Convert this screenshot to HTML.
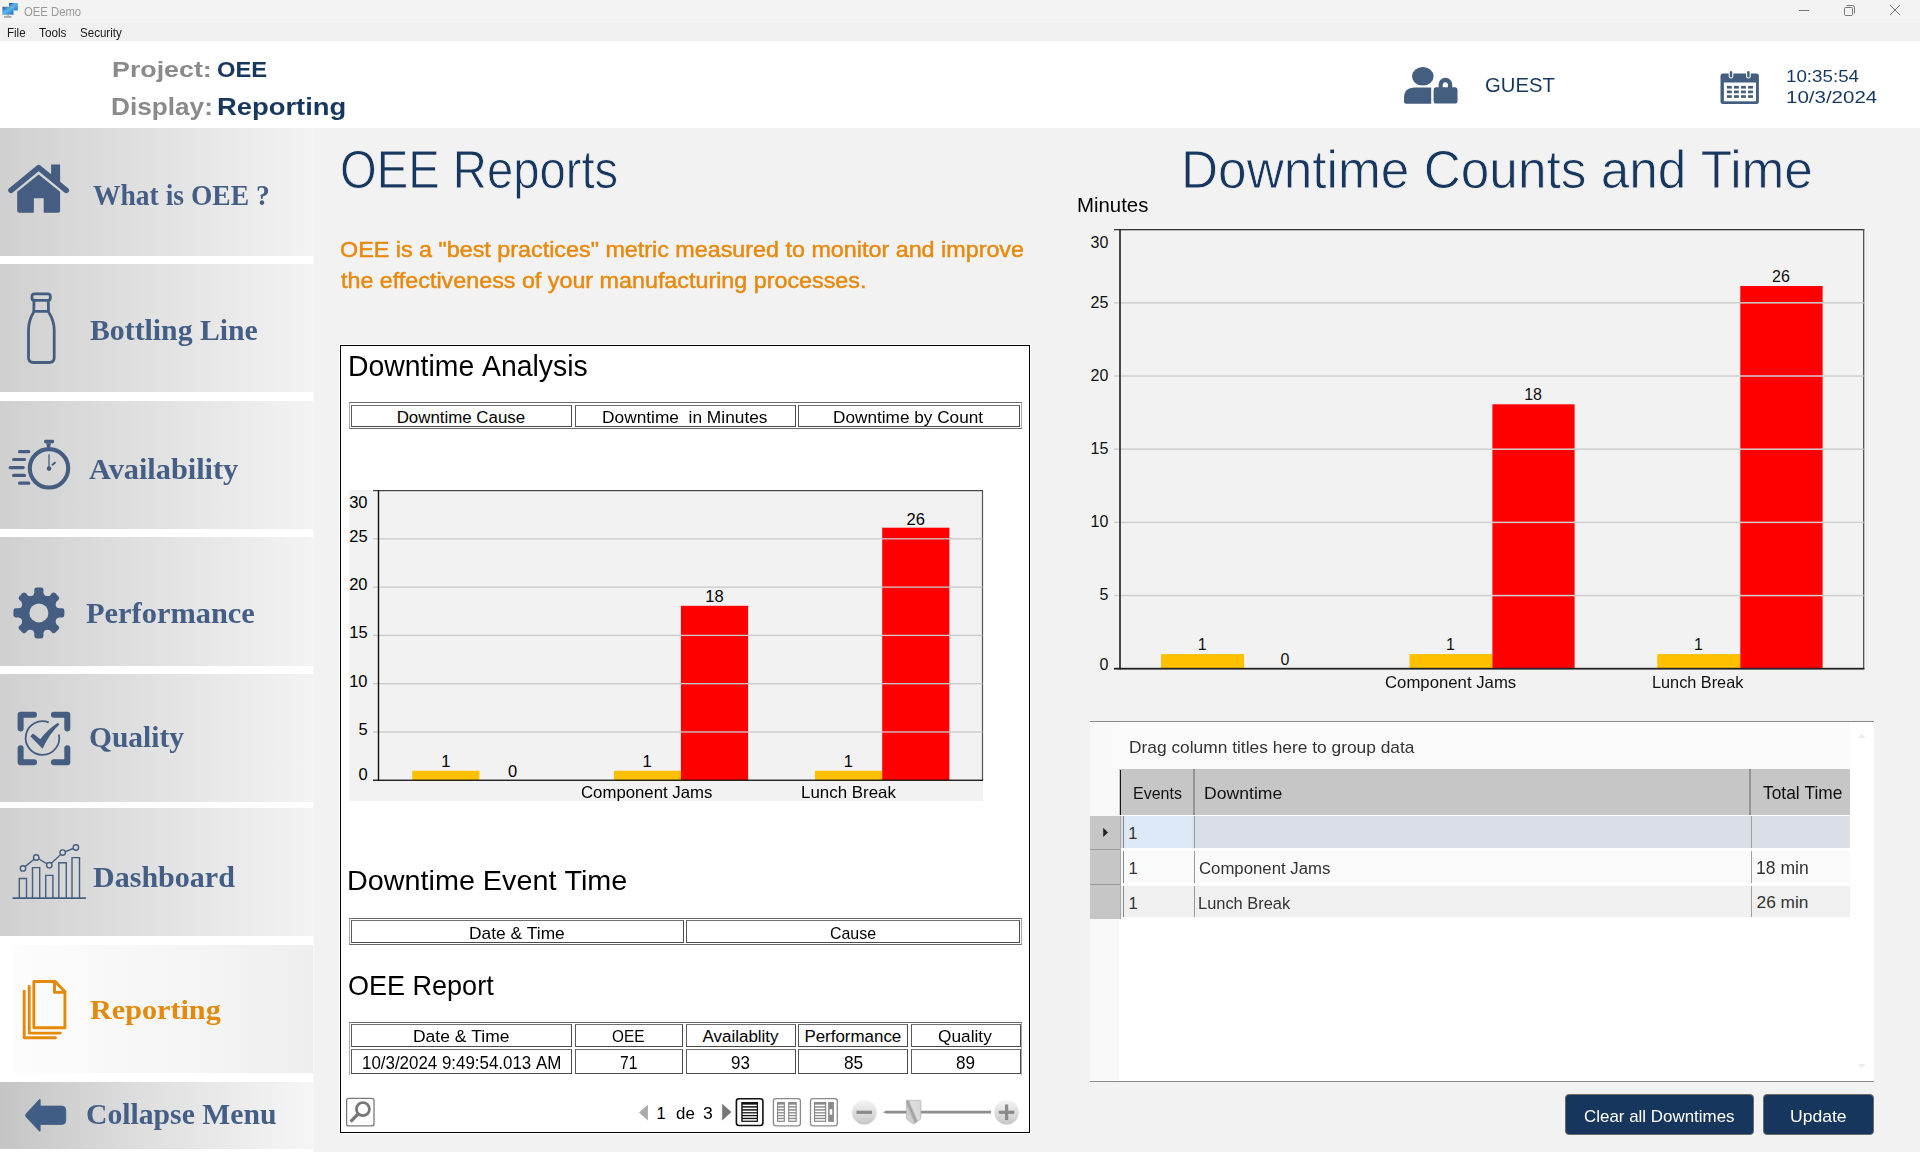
<!DOCTYPE html>
<html><head><meta charset="utf-8"><title>OEE Demo</title>
<style>
html,body{margin:0;padding:0;width:1920px;height:1152px;overflow:hidden;background:#f2f2f2}
.r{position:absolute}
.t{position:absolute;white-space:nowrap;transform-origin:0 0}
.bl{display:inline-block;width:0;height:0;vertical-align:baseline}
svg.full{position:absolute;left:0;top:0}
</style></head><body>
<div class="r" style="left:0;top:0;width:1920px;height:23px;background:#f3f3f3"></div>
<div class="r" style="left:0;top:23px;width:1920px;height:18px;background:#f0f0f0"></div>
<svg class="r" style="left:0;top:0" width="22" height="22" viewBox="0 0 22 22">
<defs><linearGradient id="mon" x1="0" y1="0" x2="1" y2="1"><stop offset="0" stop-color="#1a4fa0"/><stop offset="0.45" stop-color="#5bb8ee"/><stop offset="1" stop-color="#0a6cc8"/></linearGradient></defs>
<rect x="9" y="3" width="8.7" height="7.4" fill="url(#mon)"/>
<rect x="2.3" y="6.9" width="11.2" height="7.9" fill="url(#mon)" stroke="#b8b0a8" stroke-width="0.5"/>
<rect x="4" y="16" width="7.5" height="1.8" fill="#a8a8a8"/><rect x="7" y="14.8" width="2" height="1.2" fill="#bbb"/>
</svg>
<div class="t t1" style="left:23.55px;top:6.31px;font:400 12.65px/12.65px 'Liberation Sans',sans-serif;color:#9a9a9a;transform:scaleX(0.8931);">OEE&#160;Demo<span class="bl"></span></div>
<div class="t t2" style="left:6.56px;top:27.31px;font:400 12.35px/12.35px 'Liberation Sans',sans-serif;color:#1a1a1a;transform:scaleX(0.9351);">File<span class="bl"></span></div>
<div class="t t3" style="left:38.81px;top:27.31px;font:400 12.35px/12.35px 'Liberation Sans',sans-serif;color:#1a1a1a;transform:scaleX(0.9541);">Tools<span class="bl"></span></div>
<div class="t t4" style="left:80.03px;top:27.31px;font:400 12.35px/12.35px 'Liberation Sans',sans-serif;color:#1a1a1a;transform:scaleX(0.9368);">Security<span class="bl"></span></div>
<div class="r" style="left:1799px;top:10px;width:10px;height:1px;background:#777"></div>
<svg class="r" style="left:1843px;top:4px" width="13" height="13" viewBox="0 0 13 13"><rect x="1.5" y="3.5" width="8" height="8" rx="1" fill="none" stroke="#777"/><path d="M3.5 1.5h6a2 2 0 0 1 2 2v6" fill="none" stroke="#777"/></svg>
<svg class="r" style="left:1889px;top:4px" width="12" height="12" viewBox="0 0 12 12"><path d="M1 1L11 11M11 1L1 11" stroke="#777" stroke-width="1"/></svg>
<div class="r" style="left:0;top:41px;width:1920px;height:87px;background:#fff"></div>
<div class="t t5" style="left:111.53px;top:58.10px;font:700 22.67px/22.67px 'Liberation Sans',sans-serif;color:#8a8a8a;transform:scaleX(1.1829);">Project:<span class="bl"></span></div>
<div class="t t6" style="left:216.56px;top:58.10px;font:700 22.67px/22.67px 'Liberation Sans',sans-serif;color:#17375f;transform:scaleX(1.0476);">OEE<span class="bl"></span></div>
<div class="t t7" style="left:111.31px;top:95.70px;font:700 23.26px/23.26px 'Liberation Sans',sans-serif;color:#8a8a8a;transform:scaleX(1.1264);">Display:<span class="bl"></span></div>
<div class="t t8" style="left:217.23px;top:95.70px;font:700 23.26px/23.26px 'Liberation Sans',sans-serif;color:#17375f;transform:scaleX(1.1776);">Reporting<span class="bl"></span></div>
<svg class="r" style="left:1400px;top:62px" width="62" height="46" viewBox="1400 62 62 46">
<ellipse cx="1422.8" cy="76.3" rx="10.8" ry="9.3" fill="#445e80"/>
<path d="M1404 101.5 V98 Q1404 87.6 1415 87.6 H1431.2 V103.7 H1406.2 Q1404 103.7 1404 101.5 Z" fill="#445e80"/>
<path d="M1438.6 88 V84.5 A6.8 6.8 0 0 1 1452.2 84.5 V88 H1448 V84.5 A2.7 2.7 0 0 0 1442.7 84.5 V88Z" fill="#445e80"/>
<rect x="1433.6" y="87.3" width="23.9" height="16.3" rx="2.6" fill="#445e80"/>
</svg>
<div class="t t9" style="left:1484.59px;top:74.75px;font:400 19.99px/19.99px 'Liberation Sans',sans-serif;color:#17375f;transform:scaleX(1.0133);">GUEST<span class="bl"></span></div>
<svg class="r" style="left:1718px;top:68px" width="44" height="40" viewBox="1718 68 44 40"><rect x="1720.5" y="73.6" width="38.4" height="30.3" rx="2.5" fill="#445e80"/><rect x="1723.9" y="82.5" width="32.1" height="18.8" fill="#fff"/><rect x="1728.7" y="70.5" width="4.6" height="8" rx="2.3" fill="#fff"/><rect x="1729.8" y="71" width="2.4" height="6.5" rx="1.2" fill="#445e80"/><rect x="1746.1000000000001" y="70.5" width="4.6" height="8" rx="2.3" fill="#fff"/><rect x="1747.2" y="71" width="2.4" height="6.5" rx="1.2" fill="#445e80"/><rect x="1726.90" y="85.90" width="4.9" height="2.7" fill="#445e80"/><rect x="1733.95" y="85.90" width="4.9" height="2.7" fill="#445e80"/><rect x="1741.00" y="85.90" width="4.9" height="2.7" fill="#445e80"/><rect x="1748.05" y="85.90" width="4.9" height="2.7" fill="#445e80"/><rect x="1726.90" y="90.55" width="4.9" height="2.7" fill="#445e80"/><rect x="1733.95" y="90.55" width="4.9" height="2.7" fill="#445e80"/><rect x="1741.00" y="90.55" width="4.9" height="2.7" fill="#445e80"/><rect x="1748.05" y="90.55" width="4.9" height="2.7" fill="#445e80"/><rect x="1726.90" y="95.20" width="4.9" height="2.7" fill="#445e80"/><rect x="1733.95" y="95.20" width="4.9" height="2.7" fill="#445e80"/><rect x="1741.00" y="95.20" width="4.9" height="2.7" fill="#445e80"/><rect x="1748.05" y="95.20" width="4.9" height="2.7" fill="#445e80"/></svg>
<div class="t t10" style="left:1786.48px;top:68.01px;font:400 17.01px/17.01px 'Liberation Sans',sans-serif;color:#17375f;transform:scaleX(1.1039);">10:35:54<span class="bl"></span></div>
<div class="t t11" style="left:1786.33px;top:89.90px;font:400 16.72px/16.72px 'Liberation Sans',sans-serif;color:#17375f;transform:scaleX(1.2273);">10/3/2024<span class="bl"></span></div>
<div class="r" style="left:0;top:128px;width:1920px;height:1024px;background:#f2f2f2"></div>
<div class="r" style="left:0;top:128px;width:314px;height:1024px;background:#fff"></div>
<div class="r" style="left:0;top:128px;width:313px;height:128px;background:linear-gradient(90deg,#d0d0d0,#f3f3f3)"></div>
<div class="r" style="left:0;top:264px;width:313px;height:128px;background:linear-gradient(90deg,#d0d0d0,#f3f3f3)"></div>
<div class="r" style="left:0;top:401px;width:313px;height:128px;background:linear-gradient(90deg,#d0d0d0,#f3f3f3)"></div>
<div class="r" style="left:0;top:537px;width:313px;height:129px;background:linear-gradient(90deg,#d0d0d0,#f3f3f3)"></div>
<div class="r" style="left:0;top:674px;width:313px;height:128px;background:linear-gradient(90deg,#d0d0d0,#f3f3f3)"></div>
<div class="r" style="left:0;top:808px;width:313px;height:128px;background:linear-gradient(90deg,#d0d0d0,#f3f3f3)"></div>
<div class="r" style="left:13px;top:945px;width:300px;height:128px;background:linear-gradient(90deg,#fcfcfc,#f5f5f5 60%,#eeeeee)"></div>
<div class="r" style="left:0;top:1082px;width:313px;height:67px;background:linear-gradient(90deg,#c4c4c4,#dedede 45%,#f6f6f6)"></div>
<div class="r" style="left:313px;top:128px;width:1px;height:1024px;background:#f6f6f6"></div>
<div class="t t12" style="left:92.62px;top:180.71px;font:700 29.17px/29.17px 'Liberation Serif',serif;color:#445e86;transform:scaleX(0.9444);">What&#160;is&#160;OEE&#160;?<span class="bl"></span></div>
<div class="t t13" style="left:89.81px;top:315.21px;font:700 30.09px/30.09px 'Liberation Serif',serif;color:#445e86;transform:scaleX(0.9893);">Bottling&#160;Line<span class="bl"></span></div>
<div class="t t14" style="left:89.20px;top:453.81px;font:700 30.09px/30.09px 'Liberation Serif',serif;color:#445e86;transform:scaleX(1.0074);">Availability<span class="bl"></span></div>
<div class="t t15" style="left:85.58px;top:598.81px;font:700 29.17px/29.17px 'Liberation Serif',serif;color:#445e86;transform:scaleX(1.0428);">Performance<span class="bl"></span></div>
<div class="t t16" style="left:89.31px;top:722.32px;font:700 29.78px/29.78px 'Liberation Serif',serif;color:#445e86;transform:scaleX(0.9905);">Quality<span class="bl"></span></div>
<div class="t t17" style="left:92.69px;top:862.71px;font:700 29.17px/29.17px 'Liberation Serif',serif;color:#445e86;transform:scaleX(1.0299);">Dashboard<span class="bl"></span></div>
<div class="t t18" style="left:89.77px;top:996.01px;font:700 28.25px/28.25px 'Liberation Serif',serif;color:#e5890a;transform:scaleX(1.0680);">Reporting<span class="bl"></span></div>
<div class="t t19" style="left:85.56px;top:1099.82px;font:700 28.86px/28.86px 'Liberation Serif',serif;color:#445e86;transform:scaleX(1.0284);">Collapse&#160;Menu<span class="bl"></span></div>
<div class="r" style="left:339px;top:344px;width:692px;height:790px;background:#fff"></div>
<div class="r" style="left:340px;top:345px;width:688px;height:786px;border:1px solid #000;background:#fff"></div>
<div class="r" style="left:349px;top:402px;width:673px;height:27px;border-top:1px solid #6a6a6a;border-bottom:1px solid #6a6a6a;border-left:1px solid #a8a8a8;border-right:1px solid #a8a8a8;box-sizing:border-box;background:#fff"></div>
<div class="r" style="left:351px;top:405px;width:221px;height:22px;box-sizing:border-box;border-style:solid;border-width:1px;border-color:#707070 #4a4a4a #4a4a4a #5a5a5a;background:#fff"></div>
<div class="r" style="left:575px;top:405px;width:220.5px;height:22px;box-sizing:border-box;border-style:solid;border-width:1px;border-color:#707070 #4a4a4a #4a4a4a #5a5a5a;background:#fff"></div>
<div class="r" style="left:798px;top:405px;width:222px;height:22px;box-sizing:border-box;border-style:solid;border-width:1px;border-color:#707070 #4a4a4a #4a4a4a #5a5a5a;background:#fff"></div>
<div class="r" style="left:349px;top:490px;width:634px;height:311px;background:#f2f2f2"></div>
<div class="r" style="left:349px;top:918px;width:673px;height:27px;border-top:1px solid #6a6a6a;border-bottom:1px solid #6a6a6a;border-left:1px solid #a8a8a8;border-right:1px solid #a8a8a8;box-sizing:border-box;background:#fff"></div>
<div class="r" style="left:351px;top:920px;width:333px;height:23px;box-sizing:border-box;border-style:solid;border-width:1px;border-color:#707070 #4a4a4a #4a4a4a #5a5a5a;background:#fff"></div>
<div class="r" style="left:686px;top:920px;width:334px;height:23px;box-sizing:border-box;border-style:solid;border-width:1px;border-color:#707070 #4a4a4a #4a4a4a #5a5a5a;background:#fff"></div>
<div class="r" style="left:349px;top:1022px;width:673px;height:53px;border-top:1px solid #6a6a6a;border-left:1px solid #a8a8a8;border-right:1px solid #a8a8a8;box-sizing:border-box;background:#fff"></div>
<div class="r" style="left:351px;top:1024px;width:221px;height:22.5px;box-sizing:border-box;border-style:solid;border-width:1px;border-color:#707070 #4a4a4a #4a4a4a #5a5a5a;background:#fff"></div>
<div class="r" style="left:574.5px;top:1024px;width:108.5px;height:22.5px;box-sizing:border-box;border-style:solid;border-width:1px;border-color:#707070 #4a4a4a #4a4a4a #5a5a5a;background:#fff"></div>
<div class="r" style="left:686px;top:1024px;width:110px;height:22.5px;box-sizing:border-box;border-style:solid;border-width:1px;border-color:#707070 #4a4a4a #4a4a4a #5a5a5a;background:#fff"></div>
<div class="r" style="left:798px;top:1024px;width:110px;height:22.5px;box-sizing:border-box;border-style:solid;border-width:1px;border-color:#707070 #4a4a4a #4a4a4a #5a5a5a;background:#fff"></div>
<div class="r" style="left:911px;top:1024px;width:110px;height:22.5px;box-sizing:border-box;border-style:solid;border-width:1px;border-color:#707070 #4a4a4a #4a4a4a #5a5a5a;background:#fff"></div>
<div class="r" style="left:351px;top:1049px;width:221px;height:25px;box-sizing:border-box;border-style:solid;border-width:1px;border-color:#707070 #4a4a4a #4a4a4a #5a5a5a;background:#fff"></div>
<div class="r" style="left:574.5px;top:1049px;width:108.5px;height:25px;box-sizing:border-box;border-style:solid;border-width:1px;border-color:#707070 #4a4a4a #4a4a4a #5a5a5a;background:#fff"></div>
<div class="r" style="left:686px;top:1049px;width:110px;height:25px;box-sizing:border-box;border-style:solid;border-width:1px;border-color:#707070 #4a4a4a #4a4a4a #5a5a5a;background:#fff"></div>
<div class="r" style="left:798px;top:1049px;width:110px;height:25px;box-sizing:border-box;border-style:solid;border-width:1px;border-color:#707070 #4a4a4a #4a4a4a #5a5a5a;background:#fff"></div>
<div class="r" style="left:911px;top:1049px;width:110px;height:25px;box-sizing:border-box;border-style:solid;border-width:1px;border-color:#707070 #4a4a4a #4a4a4a #5a5a5a;background:#fff"></div>
<div class="r" style="left:1090px;top:721px;width:784px;height:361px;background:#fff;border-top:1px solid #8a8a8a;border-bottom:1px solid #8a8a8a;box-sizing:border-box"></div>
<div class="r" style="left:1090px;top:722px;width:29px;height:359px;background:#f9f9f9"></div>
<div class="r" style="left:1119px;top:722px;width:731px;height:47px;background:#fafafa"></div>
<div class="r" style="left:1119px;top:769px;width:731px;height:46px;background:#c6c6c6"></div>
<div class="r" style="left:1119.5px;top:770px;width:1.6px;height:45px;background:#151515"></div>
<div class="r" style="left:1192.5px;top:769px;width:2px;height:46px;background:#939393"></div>
<div class="r" style="left:1749px;top:769px;width:2px;height:46px;background:#939393"></div>
<div class="r" style="left:1090px;top:815.5px;width:29.5px;height:103px;background:#c6c6c6"></div>
<div class="r" style="left:1090px;top:848.5px;width:29.5px;height:1.5px;background:#9a9a9a"></div>
<div class="r" style="left:1090px;top:883.5px;width:29.5px;height:1.5px;background:#9a9a9a"></div>
<div class="r" style="left:1119.5px;top:815.5px;width:1.5px;height:103px;background:#a8a8a8"></div>
<div class="r" style="left:1121px;top:815.5px;width:729px;height:32px;background:#d9dee7"></div>
<div class="r" style="left:1123.5px;top:815.5px;width:69.5px;height:32px;background:#dce8f6"></div>
<div class="r" style="left:1121px;top:851px;width:729px;height:31.7px;background:#fafafa"></div>
<div class="r" style="left:1121px;top:886px;width:729px;height:30.6px;background:#f0f0f0"></div>
<div class="r" style="left:1122.7px;top:815.5px;width:1px;height:32.1px;background:#8a8a8a"></div>
<div class="r" style="left:1194px;top:815.5px;width:1px;height:32.1px;background:#9a9a9a"></div>
<div class="r" style="left:1751px;top:815.5px;width:1px;height:32.1px;background:#a0a0a0"></div>
<div class="r" style="left:1122.7px;top:851px;width:1px;height:31.7px;background:#8a8a8a"></div>
<div class="r" style="left:1194px;top:851px;width:1px;height:31.7px;background:#9a9a9a"></div>
<div class="r" style="left:1751px;top:851px;width:1px;height:31.7px;background:#a0a0a0"></div>
<div class="r" style="left:1122.7px;top:886px;width:1px;height:30.6px;background:#8a8a8a"></div>
<div class="r" style="left:1194px;top:886px;width:1px;height:30.6px;background:#9a9a9a"></div>
<div class="r" style="left:1751px;top:886px;width:1px;height:30.6px;background:#a0a0a0"></div>
<div class="r" style="left:1564.5px;top:1094px;width:189.5px;height:41px;background:#17365d;border:1px solid #6a6a6a;border-radius:4px;box-sizing:border-box"></div>
<div class="r" style="left:1763.3px;top:1094px;width:110.5px;height:41px;background:#17365d;border:1px solid #6a6a6a;border-radius:4px;box-sizing:border-box"></div>
<svg class="full" width="1920" height="1152" viewBox="0 0 1920 1152">
<g fill="#445d80" stroke="none">
<path d="M11 190.3 L38.65 167.7 L66.3 190.3" fill="none" stroke="#445d80" stroke-width="5.6" stroke-linecap="round" stroke-linejoin="round"/>
<path d="M51.1 164.6 H60.1 V182.6 L51.1 175.4 Z"/>
<path d="M38.65 174.5 L60.1 191.7 V210.8 Q60.1 212.8 58.1 212.8 H43.7 V198.2 H33.85 V212.8 H19.2 Q17.2 212.8 17.2 210.8 V191.7 Z"/>
</g>
<g fill="none" stroke="#445d80" stroke-width="2.8" stroke-linejoin="round">
<rect x="32" y="293.8" width="18.3" height="6.6" rx="2.5"/>
<path d="M34 301 L33.8 312 M48.3 301 L48.5 312 M33.5 311.3 H48.8"/>
<path d="M33.8 312 C30 318 28.5 322 28.5 330 V357.5 Q28.5 362.5 33.5 362.5 H49.2 Q54.2 362.5 54.2 357.5 V330 C54.2 322 52.5 318 48.5 312"/>
</g>
<g fill="none" stroke="#445d80">
<circle cx="49" cy="468.35" r="19.2" stroke-width="4.1"/>
<path d="M49 454.3 V468" stroke-width="1.3"/>
<path d="M51.9 465.2 L55.5 462.3" stroke-width="2"/>
<path d="M19.6 451.7 H28.7" stroke-width="3.2" stroke-linecap="round"/>
<path d="M13.6 459.5 H24.5" stroke-width="3.2" stroke-linecap="round"/>
<path d="M10.2 467.6 H23.2" stroke-width="3.2" stroke-linecap="round"/>
<path d="M13.6 475.4 H24.5" stroke-width="3.2" stroke-linecap="round"/>
<path d="M19.6 483.2 H28.7" stroke-width="3.2" stroke-linecap="round"/>
</g>
<g fill="#445d80"><rect x="44.1" y="439.7" width="9.9" height="3.6" rx="1.2"/><path d="M46.1 443.3 H51.1 L49.7 448.5 H47.5 Z"/><circle cx="49" cy="468.6" r="2.3"/></g>
<defs><mask id="gearm" maskUnits="userSpaceOnUse" x="0" y="570" width="80" height="90"><rect x="0" y="570" width="80" height="90" fill="#fff"/><circle cx="38.9" cy="612.9" r="9.5" fill="#000"/><circle cx="47.40" cy="592.39" r="3.7" fill="#000"/><circle cx="59.41" cy="604.40" r="3.7" fill="#000"/><circle cx="59.41" cy="621.40" r="3.7" fill="#000"/><circle cx="47.40" cy="633.41" r="3.7" fill="#000"/><circle cx="30.40" cy="633.41" r="3.7" fill="#000"/><circle cx="18.39" cy="621.40" r="3.7" fill="#000"/><circle cx="18.39" cy="604.40" r="3.7" fill="#000"/><circle cx="30.40" cy="592.39" r="3.7" fill="#000"/></mask></defs><g fill="#445d80" mask="url(#gearm)"><circle cx="38.9" cy="612.9" r="20.5"/><rect x="34.30" y="587.40" width="9.2" height="12" rx="2.4" transform="rotate(0 38.9 612.9)"/><rect x="34.30" y="587.40" width="9.2" height="12" rx="2.4" transform="rotate(45 38.9 612.9)"/><rect x="34.30" y="587.40" width="9.2" height="12" rx="2.4" transform="rotate(90 38.9 612.9)"/><rect x="34.30" y="587.40" width="9.2" height="12" rx="2.4" transform="rotate(135 38.9 612.9)"/><rect x="34.30" y="587.40" width="9.2" height="12" rx="2.4" transform="rotate(180 38.9 612.9)"/><rect x="34.30" y="587.40" width="9.2" height="12" rx="2.4" transform="rotate(225 38.9 612.9)"/><rect x="34.30" y="587.40" width="9.2" height="12" rx="2.4" transform="rotate(270 38.9 612.9)"/><rect x="34.30" y="587.40" width="9.2" height="12" rx="2.4" transform="rotate(315 38.9 612.9)"/></g>
<g fill="none" stroke="#445d80" stroke-width="6" stroke-linecap="round" stroke-linejoin="round">
<path d="M20.6 728.6 V714.8 H34"/><path d="M53.9 714.8 H67.3 V728.6"/><path d="M20.6 748.2 V762.2 H34"/><path d="M53.9 762.2 H67.3 V748.2"/>
</g>
<path d="M48.7 722.4 A16.8 16.8 0 1 0 58.9 734.5" fill="none" stroke="#445d80" stroke-width="1.8"/>
<path d="M30.3 736.3 L33.1 733.6 L40.3 739.3 Q47.5 729.5 57.9 722.8 L59.4 724.6 Q49.5 733.5 42.6 748.8 Z" fill="#445d80"/>
<g fill="none" stroke="#445d80" stroke-width="1.4">
<path d="M12.6 898.2 H85.9" stroke-width="1.8"/>
<path d="M19.3 898 V878.5 H26.5 V898"/>
<path d="M32.5 898 V867.6 H39.699999999999996 V898"/>
<path d="M45.7 898 V875.4000000000001 H52.9 V898"/>
<path d="M58.800000000000004 898 V862.8000000000001 H66.3 V898"/>
<path d="M72.0 898 V857.6 H79.5 V898"/>
<path d="M23 868.4 L36.2 857.5 L49.3 865.2 L62.7 852.6 L75.9 847.5"/>
<circle cx="23" cy="868.4" r="2.7" fill="#dadada"/>
<circle cx="36.2" cy="857.5" r="2.7" fill="#dadada"/>
<circle cx="49.3" cy="865.2" r="2.7" fill="#dadada"/>
<circle cx="62.7" cy="852.6" r="2.7" fill="#dadada"/>
<circle cx="75.9" cy="847.5" r="2.7" fill="#dadada"/>
</g>
<g fill="none" stroke="#e5890a" stroke-width="2.9" stroke-linecap="round" stroke-linejoin="round">
<path d="M33.85 981.45 H55.2 L64.95 991.8 V1027.75 H33.85 Z"/>
<path d="M54.5 981.9 V992.4 H64.5"/>
<path d="M29.2 986.5 V1033.1 H60.3"/>
<path d="M24.2 991.3 V1037.8 H55.5"/>
</g>
<path d="M26.2 1113.7 L39.3 1099.6 Q40.2 1098.8 40.2 1100.2 V1106.1 H61.8 Q65.8 1106.1 65.8 1110.1 V1120.5 Q65.8 1124.5 61.8 1124.5 H40.2 V1130.4 Q40.2 1131.8 39.3 1131 L26.2 1117.1 Q25 1115.4 26.2 1113.7 Z" fill="#405e85" stroke="#405e85" stroke-width="0.8" stroke-linejoin="round"/>
<rect x="373" y="490" width="610.00" height="1.2" fill="#444"/>
<rect x="981.9" y="490" width="1.2" height="290.20" fill="#555"/>
<rect x="412.2" y="770.8" width="67.20" height="9.40" fill="#ffc000"/>
<rect x="613.9" y="770.8" width="67.00" height="9.40" fill="#ffc000"/>
<rect x="680.9" y="605.8" width="67.20" height="174.40" fill="#ff0000"/>
<rect x="814.9" y="770.8" width="67.30" height="9.40" fill="#ffc000"/>
<rect x="882.2" y="527.7" width="67.20" height="252.50" fill="#ff0000"/>
<rect x="373" y="731.32" width="609.50" height="1.3" fill="#c9c9c9"/>
<rect x="373" y="683.03" width="609.50" height="1.3" fill="#c9c9c9"/>
<rect x="373" y="634.75" width="609.50" height="1.3" fill="#c9c9c9"/>
<rect x="373" y="586.47" width="609.50" height="1.3" fill="#c9c9c9"/>
<rect x="373" y="538.18" width="609.50" height="1.3" fill="#c9c9c9"/>
<rect x="377.8" y="490" width="1.4" height="290.80" fill="#111"/>
<rect x="373" y="779.6" width="610.10" height="1.3" fill="#111"/>
<rect x="346.6" y="1098.3" width="27.4" height="27.6" rx="2.2" fill="#fff" stroke="#7a7a7a" stroke-width="1.3"/>
<circle cx="362.9" cy="1109.2" r="6.5" fill="none" stroke="#777" stroke-width="2.8"/><path d="M358.2 1114 L350.6 1121.6" stroke="#777" stroke-width="3.2"/>
<path d="M647.9 1104.7 V1120.6 L639 1112.6 Z" fill="#aaa"/>
<path d="M722.2 1103.75 V1120.4 L731.4 1112 Z" fill="#777"/>
<rect x="736.4" y="1098.8" width="26.5" height="26.7" rx="2.5" fill="#fff" stroke="#111" stroke-width="1.6"/>
<rect x="741.25" y="1102" width="16.75" height="19.9" fill="#111"/>
<rect x="742.6" y="1104.65" width="14.2" height="1.5" fill="#fff"/>
<rect x="742.6" y="1107.65" width="14.2" height="1.5" fill="#fff"/>
<rect x="742.6" y="1110.65" width="14.2" height="1.5" fill="#fff"/>
<rect x="742.6" y="1113.45" width="14.2" height="1.5" fill="#fff"/>
<rect x="742.6" y="1116.25" width="14.2" height="1.5" fill="#fff"/>
<rect x="742.6" y="1119.15" width="14.2" height="1.5" fill="#fff"/>
<rect x="773.4" y="1098.6" width="27" height="27.2" rx="2.5" fill="#fff" stroke="#8a8a8a" stroke-width="1.3"/>
<rect x="777" y="1102" width="7.9" height="19.9" fill="#8a8a8a"/><rect x="788.1" y="1102" width="8.65" height="19.9" fill="#8a8a8a"/>
<rect x="778.1" y="1104.65" width="5.7" height="1.5" fill="#fff"/><rect x="789.2" y="1104.65" width="6.4" height="1.5" fill="#fff"/>
<rect x="778.1" y="1107.65" width="5.7" height="1.5" fill="#fff"/><rect x="789.2" y="1107.65" width="6.4" height="1.5" fill="#fff"/>
<rect x="778.1" y="1110.65" width="5.7" height="1.5" fill="#fff"/><rect x="789.2" y="1110.65" width="6.4" height="1.5" fill="#fff"/>
<rect x="778.1" y="1113.45" width="5.7" height="1.5" fill="#fff"/><rect x="789.2" y="1113.45" width="6.4" height="1.5" fill="#fff"/>
<rect x="778.1" y="1116.25" width="5.7" height="1.5" fill="#fff"/><rect x="789.2" y="1116.25" width="6.4" height="1.5" fill="#fff"/>
<rect x="778.1" y="1119.15" width="5.7" height="1.5" fill="#fff"/><rect x="789.2" y="1119.15" width="6.4" height="1.5" fill="#fff"/>
<rect x="810.5" y="1098.6" width="26.8" height="27.2" rx="2.5" fill="#fff" stroke="#8a8a8a" stroke-width="1.3"/>
<rect x="814" y="1102" width="12.25" height="19.9" fill="#8a8a8a"/><rect x="828.1" y="1102" width="5.8" height="19.9" fill="#8a8a8a"/>
<rect x="815.1" y="1104.65" width="10" height="1.5" fill="#fff"/>
<rect x="815.1" y="1107.65" width="10" height="1.5" fill="#fff"/>
<rect x="815.1" y="1110.65" width="10" height="1.5" fill="#fff"/>
<rect x="815.1" y="1113.45" width="10" height="1.5" fill="#fff"/>
<rect x="815.1" y="1116.25" width="10" height="1.5" fill="#fff"/>
<rect x="815.1" y="1119.15" width="10" height="1.5" fill="#fff"/>
<rect x="829.7" y="1109.2" width="2.5" height="5.6" fill="#fff"/>
<defs><linearGradient id="zg" x1="0" y1="0" x2="0" y2="1"><stop offset="0" stop-color="#f6f6f6"/><stop offset="1" stop-color="#c6c6c6"/></linearGradient><linearGradient id="tg" x1="0" y1="1" x2="1" y2="0.3"><stop offset="0" stop-color="#d4d4d4"/><stop offset="0.35" stop-color="#cdcdcd"/><stop offset="0.5" stop-color="#9a9a9a"/><stop offset="0.62" stop-color="#dcdcdc"/><stop offset="1" stop-color="#d8d8d8"/></linearGradient></defs>
<circle cx="864.3" cy="1112.2" r="12.3" fill="url(#zg)"/><rect x="856.5" y="1110.7" width="15.5" height="3.2" fill="#8a8a8a"/>
<circle cx="1006.6" cy="1112.2" r="12.3" fill="url(#zg)"/><rect x="998.8" y="1110.7" width="15.5" height="3.2" fill="#8a8a8a"/><rect x="1005" y="1104.5" width="3.2" height="15.5" fill="#8a8a8a"/>
<path d="M883 1112.2 L886 1110.8 H991 V1113.6 H886 Z" fill="#8e8e8e"/>
<path d="M906.4 1101.3 Q906.4 1100.3 907.4 1100.3 H919.9 Q920.9 1100.3 920.9 1101.3 V1118.8 L914.4 1123.8 H913 L906.4 1118.8 Z" fill="url(#tg)" stroke="#a8a8a8" stroke-width="0.6"/>
<rect x="1114" y="229" width="750.30" height="1.3" fill="#333"/>
<rect x="1863.0" y="229" width="1.3" height="439.70" fill="#555"/>
<rect x="1161" y="654.1" width="83.10" height="14.60" fill="#ffc000"/>
<rect x="1409.5" y="654.1" width="82.90" height="14.60" fill="#ffc000"/>
<rect x="1492.4" y="404.3" width="82.20" height="264.40" fill="#ff0000"/>
<rect x="1657.2" y="654.1" width="83.10" height="14.60" fill="#ffc000"/>
<rect x="1740.3" y="286" width="82.30" height="382.70" fill="#ff0000"/>
<rect x="1114" y="594.82" width="749.70" height="1.5" fill="#cfcfcf"/>
<rect x="1114" y="521.63" width="749.70" height="1.5" fill="#cfcfcf"/>
<rect x="1114" y="448.45" width="749.70" height="1.5" fill="#cfcfcf"/>
<rect x="1114" y="375.27" width="749.70" height="1.5" fill="#cfcfcf"/>
<rect x="1114" y="302.08" width="749.70" height="1.5" fill="#cfcfcf"/>
<rect x="1119.2" y="229" width="1.6" height="440.50" fill="#222"/>
<rect x="1114" y="667.8000000000001" width="750.40" height="1.8" fill="#222"/>
<path d="M1103.2 827.8 V837 L1108 832.4 Z" fill="#222"/>
<path d="M1858 738 L1862 734 L1866 738 Z" fill="#eeeeee"/><path d="M1858 1064 L1862 1068 L1866 1064 Z" fill="#eeeeee"/>
</svg>
<div class="t t20" style="left:340.39px;top:143.11px;font:400 53.49px/53.49px 'Liberation Sans',sans-serif;color:#17375f;transform:scaleX(0.8829);-webkit-text-stroke:0.8px #f2f2f2;paint-order:normal;">OEE&#160;Reports<span class="bl"></span></div>
<div class="t t21" style="left:339.92px;top:240.00px;font:400 21.51px/21.51px 'Liberation Sans',sans-serif;color:#e8890c;transform:scaleX(1.0846);-webkit-text-stroke:0.45px #e8890c;">OEE&#160;is&#160;a&#160;"best&#160;practices"&#160;metric&#160;measured&#160;to&#160;monitor&#160;and&#160;improve<span class="bl"></span></div>
<div class="t t22" style="left:340.67px;top:270.80px;font:400 21.51px/21.51px 'Liberation Sans',sans-serif;color:#e8890c;transform:scaleX(1.0837);-webkit-text-stroke:0.45px #e8890c;">the&#160;effectiveness&#160;of&#160;your&#160;manufacturing&#160;processes.<span class="bl"></span></div>
<div class="t t23" style="left:347.56px;top:349.70px;font:400 30.38px/30.38px 'Liberation Sans',sans-serif;color:#000;transform:scaleX(0.9344);">Downtime&#160;Analysis<span class="bl"></span></div>
<div class="t t24" style="left:396.70px;top:410.01px;font:400 16.86px/16.86px 'Liberation Sans',sans-serif;color:#000;">Downtime&#160;Cause<span class="bl"></span></div>
<div class="t t25" style="left:601.66px;top:410.01px;font:400 16.86px/16.86px 'Liberation Sans',sans-serif;color:#000;transform:scaleX(1.0269);">Downtime&#160;&#160;in&#160;Minutes<span class="bl"></span></div>
<div class="t t26" style="left:832.92px;top:410.01px;font:400 16.86px/16.86px 'Liberation Sans',sans-serif;color:#000;transform:scaleX(1.0198);">Downtime&#160;by&#160;Count<span class="bl"></span></div>
<div class="t t28" style="left:349.20px;top:494.01px;font:400 16.50px/16.50px 'Liberation Sans',sans-serif;color:#000;">30<span class="bl"></span></div>
<div class="t t30" style="left:349.30px;top:527.81px;font:400 16.50px/16.50px 'Liberation Sans',sans-serif;color:#000;">25<span class="bl"></span></div>
<div class="t t32" style="left:349.20px;top:576.10px;font:400 16.50px/16.50px 'Liberation Sans',sans-serif;color:#000;">20<span class="bl"></span></div>
<div class="t t34" style="left:349.30px;top:624.31px;font:400 16.50px/16.50px 'Liberation Sans',sans-serif;color:#000;">15<span class="bl"></span></div>
<div class="t t36" style="left:349.20px;top:672.60px;font:400 16.50px/16.50px 'Liberation Sans',sans-serif;color:#000;">10<span class="bl"></span></div>
<div class="t t38" style="left:358.50px;top:720.91px;font:400 16.50px/16.50px 'Liberation Sans',sans-serif;color:#000;">5<span class="bl"></span></div>
<div class="t t40" style="left:358.40px;top:765.91px;font:400 16.50px/16.50px 'Liberation Sans',sans-serif;color:#000;">0<span class="bl"></span></div>
<div class="t t41" style="left:441.20px;top:752.91px;font:400 16.50px/16.50px 'Liberation Sans',sans-serif;color:#000;">1<span class="bl"></span></div>
<div class="t t42" style="left:642.40px;top:753.01px;font:400 16.50px/16.50px 'Liberation Sans',sans-serif;color:#000;">1<span class="bl"></span></div>
<div class="t t43" style="left:843.70px;top:753.01px;font:400 16.50px/16.50px 'Liberation Sans',sans-serif;color:#000;">1<span class="bl"></span></div>
<div class="t t44" style="left:705.35px;top:587.70px;font:400 16.50px/16.50px 'Liberation Sans',sans-serif;color:#000;">18<span class="bl"></span></div>
<div class="t t45" style="left:906.55px;top:511.01px;font:400 16.50px/16.50px 'Liberation Sans',sans-serif;color:#000;">26<span class="bl"></span></div>
<div class="t t46" style="left:507.90px;top:762.81px;font:400 16.50px/16.50px 'Liberation Sans',sans-serif;color:#000;">0<span class="bl"></span></div>
<div class="t t47" style="left:581.29px;top:784.20px;font:400 16.50px/16.50px 'Liberation Sans',sans-serif;color:#000;transform:scaleX(1.0156);">Component&#160;Jams<span class="bl"></span></div>
<div class="t t48" style="left:800.67px;top:784.20px;font:400 16.50px/16.50px 'Liberation Sans',sans-serif;color:#000;transform:scaleX(1.0241);">Lunch&#160;Break<span class="bl"></span></div>
<div class="t t49" style="left:347.49px;top:867.26px;font:400 28.00px/28.00px 'Liberation Sans',sans-serif;color:#000;transform:scaleX(1.0273);">Downtime&#160;Event&#160;Time<span class="bl"></span></div>
<div class="t t50" style="left:468.88px;top:925.01px;font:400 17.15px/17.15px 'Liberation Sans',sans-serif;color:#000;transform:scaleX(1.0119);">Date&#160;&amp;&#160;Time<span class="bl"></span></div>
<div class="t t51" style="left:829.56px;top:925.01px;font:400 17.15px/17.15px 'Liberation Sans',sans-serif;color:#000;transform:scaleX(0.9296);">Cause<span class="bl"></span></div>
<div class="t t52" style="left:348.25px;top:971.71px;font:400 28.00px/28.00px 'Liberation Sans',sans-serif;color:#000;transform:scaleX(0.9649);">OEE&#160;Report<span class="bl"></span></div>
<div class="t t53" style="left:413.06px;top:1028.91px;font:400 16.93px/16.93px 'Liberation Sans',sans-serif;color:#000;transform:scaleX(1.0330);">Date&#160;&amp;&#160;Time<span class="bl"></span></div>
<div class="t t54" style="left:612.08px;top:1028.91px;font:400 16.93px/16.93px 'Liberation Sans',sans-serif;color:#000;transform:scaleX(0.9050);">OEE<span class="bl"></span></div>
<div class="t t55" style="left:702.60px;top:1028.91px;font:400 16.93px/16.93px 'Liberation Sans',sans-serif;color:#000;">Availablity<span class="bl"></span></div>
<div class="t t56" style="left:804.40px;top:1028.91px;font:400 16.93px/16.93px 'Liberation Sans',sans-serif;color:#000;">Performance<span class="bl"></span></div>
<div class="t t57" style="left:938.38px;top:1028.91px;font:400 16.93px/16.93px 'Liberation Sans',sans-serif;color:#000;transform:scaleX(1.0212);">Quality<span class="bl"></span></div>
<div class="t t58" style="left:362.15px;top:1055.00px;font:400 17.59px/17.59px 'Liberation Sans',sans-serif;color:#000;transform:scaleX(0.9617);">10/3/2024&#160;9:49:54.013&#160;AM<span class="bl"></span></div>
<div class="t t59" style="left:619.50px;top:1055.00px;font:400 17.59px/17.59px 'Liberation Sans',sans-serif;color:#000;transform:scaleX(0.8939);">71<span class="bl"></span></div>
<div class="t t60" style="left:731.03px;top:1055.00px;font:400 17.59px/17.59px 'Liberation Sans',sans-serif;color:#000;transform:scaleX(0.9669);">93<span class="bl"></span></div>
<div class="t t61" style="left:843.51px;top:1055.00px;font:400 17.59px/17.59px 'Liberation Sans',sans-serif;color:#000;transform:scaleX(0.9835);">85<span class="bl"></span></div>
<div class="t t62" style="left:956.12px;top:1055.00px;font:400 17.59px/17.59px 'Liberation Sans',sans-serif;color:#000;transform:scaleX(0.9724);">89<span class="bl"></span></div>
<div class="t t63" style="left:656.60px;top:1104.76px;font:400 16.50px/16.50px 'Liberation Sans',sans-serif;color:#000;">1<span class="bl"></span></div>
<div class="t t64" style="left:675.89px;top:1104.76px;font:400 16.50px/16.50px 'Liberation Sans',sans-serif;color:#000;transform:scaleX(1.0234);">de<span class="bl"></span></div>
<div class="t t65" style="left:703.36px;top:1104.76px;font:400 16.50px/16.50px 'Liberation Sans',sans-serif;color:#000;transform:scaleX(1.0633);">3<span class="bl"></span></div>
<div class="t t66" style="left:1180.66px;top:143.41px;font:400 53.34px/53.34px 'Liberation Sans',sans-serif;color:#17375f;transform:scaleX(0.9633);-webkit-text-stroke:0.8px #f2f2f2;">Downtime&#160;Counts&#160;and&#160;Time<span class="bl"></span></div>
<div class="t t67" style="left:1076.97px;top:194.90px;font:400 20.06px/20.06px 'Liberation Sans',sans-serif;color:#000;transform:scaleX(1.0162);">Minutes<span class="bl"></span></div>
<div class="t t68" style="left:1090.60px;top:234.90px;font:400 16.00px/16.00px 'Liberation Sans',sans-serif;color:#111;">30<span class="bl"></span></div>
<div class="t t69" style="left:1090.60px;top:294.59px;font:400 16.00px/16.00px 'Liberation Sans',sans-serif;color:#111;">25<span class="bl"></span></div>
<div class="t t70" style="left:1090.60px;top:367.77px;font:400 16.00px/16.00px 'Liberation Sans',sans-serif;color:#111;">20<span class="bl"></span></div>
<div class="t t71" style="left:1090.60px;top:440.97px;font:400 16.00px/16.00px 'Liberation Sans',sans-serif;color:#111;">15<span class="bl"></span></div>
<div class="t t72" style="left:1090.60px;top:514.14px;font:400 16.00px/16.00px 'Liberation Sans',sans-serif;color:#111;">10<span class="bl"></span></div>
<div class="t t73" style="left:1099.50px;top:587.32px;font:400 16.00px/16.00px 'Liberation Sans',sans-serif;color:#111;">5<span class="bl"></span></div>
<div class="t t74" style="left:1099.50px;top:656.50px;font:400 16.00px/16.00px 'Liberation Sans',sans-serif;color:#111;">0<span class="bl"></span></div>
<div class="t t75" style="left:1197.80px;top:636.72px;font:400 16.00px/16.00px 'Liberation Sans',sans-serif;color:#111;">1<span class="bl"></span></div>
<div class="t t76" style="left:1446.00px;top:636.72px;font:400 16.00px/16.00px 'Liberation Sans',sans-serif;color:#111;">1<span class="bl"></span></div>
<div class="t t77" style="left:1694.10px;top:636.72px;font:400 16.00px/16.00px 'Liberation Sans',sans-serif;color:#111;">1<span class="bl"></span></div>
<div class="t t78" style="left:1524.20px;top:387.00px;font:400 16.00px/16.00px 'Liberation Sans',sans-serif;color:#111;">18<span class="bl"></span></div>
<div class="t t79" style="left:1772.05px;top:268.82px;font:400 16.00px/16.00px 'Liberation Sans',sans-serif;color:#111;">26<span class="bl"></span></div>
<div class="t t80" style="left:1280.40px;top:651.60px;font:400 16.00px/16.00px 'Liberation Sans',sans-serif;color:#111;">0<span class="bl"></span></div>
<div class="t t81" style="left:1385.19px;top:674.01px;font:400 16.50px/16.50px 'Liberation Sans',sans-serif;color:#111;transform:scaleX(1.0148);">Component&#160;Jams<span class="bl"></span></div>
<div class="t t82" style="left:1652.42px;top:674.01px;font:400 16.50px/16.50px 'Liberation Sans',sans-serif;color:#111;transform:scaleX(0.9858);">Lunch&#160;Break<span class="bl"></span></div>
<div class="t t83" style="left:1129.47px;top:738.71px;font:400 17.01px/17.01px 'Liberation Sans',sans-serif;color:#333;transform:scaleX(1.0205);">Drag&#160;column&#160;titles&#160;here&#160;to&#160;group&#160;data<span class="bl"></span></div>
<div class="t t84" style="left:1133.09px;top:784.91px;font:400 17.15px/17.15px 'Liberation Sans',sans-serif;color:#111;transform:scaleX(0.9328);">Events<span class="bl"></span></div>
<div class="t t85" style="left:1204.16px;top:784.91px;font:400 17.15px/17.15px 'Liberation Sans',sans-serif;color:#111;transform:scaleX(1.0269);">Downtime<span class="bl"></span></div>
<div class="t t86" style="left:1762.61px;top:784.82px;font:400 17.73px/17.73px 'Liberation Sans',sans-serif;color:#111;transform:scaleX(0.9786);">Total&#160;Time<span class="bl"></span></div>
<div class="t t87" style="left:1128.30px;top:824.60px;font:400 16.50px/16.50px 'Liberation Sans',sans-serif;color:#333;">1<span class="bl"></span></div>
<div class="t t88" style="left:1128.40px;top:859.81px;font:400 16.50px/16.50px 'Liberation Sans',sans-serif;color:#333;">1<span class="bl"></span></div>
<div class="t t89" style="left:1128.40px;top:894.51px;font:400 16.50px/16.50px 'Liberation Sans',sans-serif;color:#333;">1<span class="bl"></span></div>
<div class="t t90" style="left:1198.82px;top:859.81px;font:400 17.30px/17.30px 'Liberation Sans',sans-serif;color:#333;transform:scaleX(0.9694);">Component&#160;Jams<span class="bl"></span></div>
<div class="t t91" style="left:1198.33px;top:895.51px;font:400 16.86px/16.86px 'Liberation Sans',sans-serif;color:#333;transform:scaleX(0.9733);">Lunch&#160;Break<span class="bl"></span></div>
<div class="t t92" style="left:1756.11px;top:860.10px;font:400 17.73px/17.73px 'Liberation Sans',sans-serif;color:#333;transform:scaleX(0.9901);">18&#160;min<span class="bl"></span></div>
<div class="t t93" style="left:1756.60px;top:894.41px;font:400 17.30px/17.30px 'Liberation Sans',sans-serif;color:#333;">26&#160;min<span class="bl"></span></div>
<div class="t t94" style="left:1583.80px;top:1107.81px;font:400 17.01px/17.01px 'Liberation Sans',sans-serif;color:#fff;transform:scaleX(0.9960);">Clear&#160;all&#160;Downtimes<span class="bl"></span></div>
<div class="t t95" style="left:1789.96px;top:1107.81px;font:400 17.01px/17.01px 'Liberation Sans',sans-serif;color:#fff;transform:scaleX(1.0322);">Update<span class="bl"></span></div>
</body></html>
